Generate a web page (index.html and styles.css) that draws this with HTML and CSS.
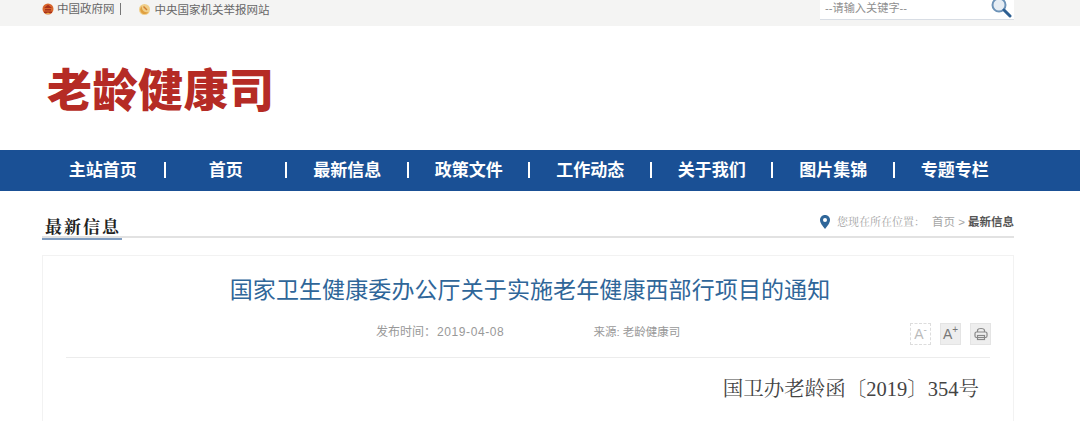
FILE: index.html
```html
<!DOCTYPE html>
<html>

<head>
    <title>老龄健康司</title>
    <meta charset="utf-8">
    <link rel="stylesheet" href="styles.css">
</head>

<body>
    <div class="topbar">
        <div class="wrap topbar-inner">
            <div class="toplinks">
                <svg class="emblem" width="12" height="12" viewBox="0 0 12 12">
                    <circle cx="6" cy="6" r="5.500" fill="#d8662c"/>
                    <path d="M2 5 L6 1.800 L10 5 Z M3 6 H9 V7.500 H3 Z M2 8.500 H10 V10 H2 Z" fill="#a8321c"/>
                    <path d="M3.500 11 L6 9.500 L8.500 11 Z" fill="#e9b04c"/>
                </svg>
                <a class="toplink sep">中国政府网</a>
                <svg class="emblem party" width="13" height="13" viewBox="0 0 13 13">
                    <circle cx="6.500" cy="6.500" r="5.500" fill="#f0cf8a"/>
                    <path d="M4 3 A4.500 4.500 0 1 0 10.500 9 A5 5 0 0 1 4 3 Z" fill="#e0a040"/>
                    <path d="M6 3 L9.500 6.500 L8.500 7.500 L5 4 Z" fill="#cf7f30"/>
                </svg>
                <a class="toplink">中央国家机关举报网站</a>
            </div>
            <div class="searchbox">
                <span class="placeholder">--请输入关键字--</span>
                <svg width="22" height="22" viewBox="0 0 22 22">
                    <circle cx="9" cy="8" r="6.500" fill="#e6edf4" stroke="#6d93b8" stroke-width="2"/>
                    <path d="M14 13 L20 19" stroke="#2d5f92" stroke-width="3" stroke-linecap="round"/>
                </svg>
            </div>
        </div>
    </div>

    <div class="wrap header">
        <div class="logo">老龄健康司</div>
    </div>

    <div class="nav">
        <div class="wrap nav-inner">
            <a class="nav-item">主站首页</a>
            <a class="nav-item">首页</a>
            <a class="nav-item">最新信息</a>
            <a class="nav-item">政策文件</a>
            <a class="nav-item">工作动态</a>
            <a class="nav-item">关于我们</a>
            <a class="nav-item">图片集锦</a>
            <a class="nav-item">专题专栏</a>
        </div>
    </div>

    <div class="wrap section-head">
        <h2>最新信息</h2>
        <div class="crumbs">
            <svg width="10" height="14" viewBox="0 0 10 14">
                <path d="M5 0 C2 0 0 2.200 0 5 C0 8.500 5 14 5 14 C5 14 10 8.500 10 5 C10 2.200 8 0 5 0 Z" fill="#2f6699"/>
                <circle cx="5" cy="5" r="2" fill="#fff"/>
            </svg>
            <span class="crumb-label">您现在所在位置：</span>
            <span class="crumb-home">首页 &gt;</span>
            <b>最新信息</b>
        </div>
    </div>

    <div class="wrap card">
        <h1>国家卫生健康委办公厅关于实施老年健康西部行项目的通知</h1>
        <div class="meta">
            <span class="meta-label">发布时间：</span>
            <span class="meta-date">2019-04-08</span>
            <span class="meta-source">来源: 老龄健康司</span>
            <div class="tools">
                <span class="tool tool-off">A<sup>-</sup></span>
                <span class="tool">A<sup>+</sup></span>
                <span class="tool">
                    <svg width="14" height="14" viewBox="0 0 14 14" fill="none" stroke="#888" stroke-width="1.200">
                        <path d="M3.500 5 V3.500 C3.500 2 5 1.500 7 1.500 C9 1.500 10.500 2 10.500 3.500 V5"/>
                        <rect x="1" y="5" width="12" height="5.500" rx="1.500"/>
                        <rect x="3.500" y="8.500" width="7" height="4"/>
                    </svg>
                </span>
            </div>
        </div>
        <p class="doc-no">国卫办老龄函〔2019〕354号</p>
    </div>
</body>

</html>
```

FILE: styles.css
```css
html,
body {
    height: 421px;
    overflow: hidden;
}

body {
    margin: 0;
    background-color: white;
    font-family: "Liberation Sans", "Noto Sans CJK SC", sans-serif;
}

.wrap {
    width: 972px;
    margin-left: 42px;
    box-sizing: border-box;
}

.topbar {
    height: 26px;
    background-color: #f4f4f3;
    overflow: hidden;
}

.topbar-inner {
    display: flex;
    justify-content: space-between;
}

.toplinks {
    display: flex;
    align-items: center;
    height: 18px;
    font-size: 11.500px;
    color: #666;
}

.emblem {
    margin-right: 3px;
}

.party {
    margin-left: 17px;
    margin-right: 4px;
}

.toplink.sep {
    padding-right: 5px;
    border-right: 1px solid #777;
    line-height: 12px;
}

.searchbox {
    width: 194px;
    height: 20px;
    background-color: white;
    border-bottom: 1px solid #d8dde4;
    display: flex;
    justify-content: space-between;
    align-items: flex-start;
    font-size: 11.200px;
    color: #8f8f8f;
    padding: 0 2px 0 5px;
    box-sizing: border-box;
}

.placeholder {
    line-height: 16px;
}

.searchbox svg {
    margin-top: -3px;
    flex: none;
}

.header {
    height: 124px;
    padding: 39px 0 0 5px;
}

.logo {
    font-size: 45px;
    line-height: 54px;
    font-weight: 900;
    color: #b52b25;
    letter-spacing: 0.500px;
}

.nav {
    height: 41px;
    background-color: #1a5095;
}

.nav-inner {
    display: grid;
    grid-template-columns: repeat(8, 121.500px);
}

.nav-item {
    line-height: 41px;
    text-align: center;
    font-size: 17px;
    font-weight: bold;
    color: white;
    position: relative;
}

.nav-item + .nav-item {
    padding-left: 3px;
}

.nav-item + .nav-item::before {
    content: "";
    position: absolute;
    left: 0;
    top: 12px;
    height: 16px;
    border-left: 2px solid white;
}

.section-head {
    margin-top: 17px;
    margin-bottom: 17px;
    height: 30px;
    border-bottom: 2px solid #e2e2e2;
    display: flex;
    justify-content: space-between;
    align-items: flex-start;
}

.section-head h2 {
    margin: 0 0 -2px 0;
    height: 30px;
    padding: 0 1px 0 3px;
    border-bottom: 2px solid #7f9cc0;
    font-family: "Liberation Serif", "Noto Serif CJK SC", "Noto Sans CJK SC", serif;
    font-size: 17px;
    line-height: 40px;
    letter-spacing: 2px;
    color: #222;
}

.crumbs {
    display: flex;
    align-items: center;
    font-size: 11.500px;
    line-height: 14px;
    color: #a5a5a5;
    margin-top: 7px;
}

.crumbs svg {
    margin-right: 7px;
}

.crumb-label {
    font-family: "Liberation Serif", "Noto Serif CJK SC", "Noto Sans CJK SC", serif;
    font-size: 11px;
    margin-right: 7px;
}

.crumb-home {
    margin-right: 3px;
}

.crumbs b {
    color: #555;
}

.card {
    height: 166px;
    border: 1px solid #f2f2f2;
    border-bottom: none;
    padding: 0 23px;
}

.card h1 {
    margin: 17px 0 0 0;
    padding-left: 4px;
    font-size: 23px;
    line-height: 34px;
    font-weight: normal;
    letter-spacing: 0.100px;
    text-align: center;
    color: #2f6699;
}

.meta {
    display: flex;
    align-items: flex-start;
    height: 24px;
    margin-top: 14px;
    padding-bottom: 12px;
    border-bottom: 1px solid #ececec;
    font-size: 12px;
    line-height: 22px;
    color: #999;
}

.meta-label {
    margin-left: 310px;
}

.meta-date {
    margin-left: 1px;
    letter-spacing: 0.600px;
}

.meta-source {
    margin-left: 89px;
    font-size: 11.500px;
}

.tools {
    display: flex;
    gap: 9px;
    margin-top: 2px;
    margin-left: auto;
    margin-right: -1px;
}

.tool {
    width: 21px;
    height: 22px;
    box-sizing: border-box;
    display: flex;
    align-items: center;
    justify-content: center;
    background-color: #eee;
    border: 1px solid #e4e4e4;
    font-size: 14px;
    color: #777;
}

.tool sup {
    font-size: 10px;
    line-height: 8px;
    align-self: flex-start;
    margin-top: 2px;
}

.tool-off {
    background-color: white;
    border: 1px dashed #ddd;
    color: #bbb;
}

.doc-no {
    margin: 18px 11px 0 0;
    text-align: right;
    font-family: "Liberation Serif", "Noto Serif CJK SC", "Noto Sans CJK SC", serif;
    font-size: 20.500px;
    line-height: 26px;
    color: #444;
}
```
